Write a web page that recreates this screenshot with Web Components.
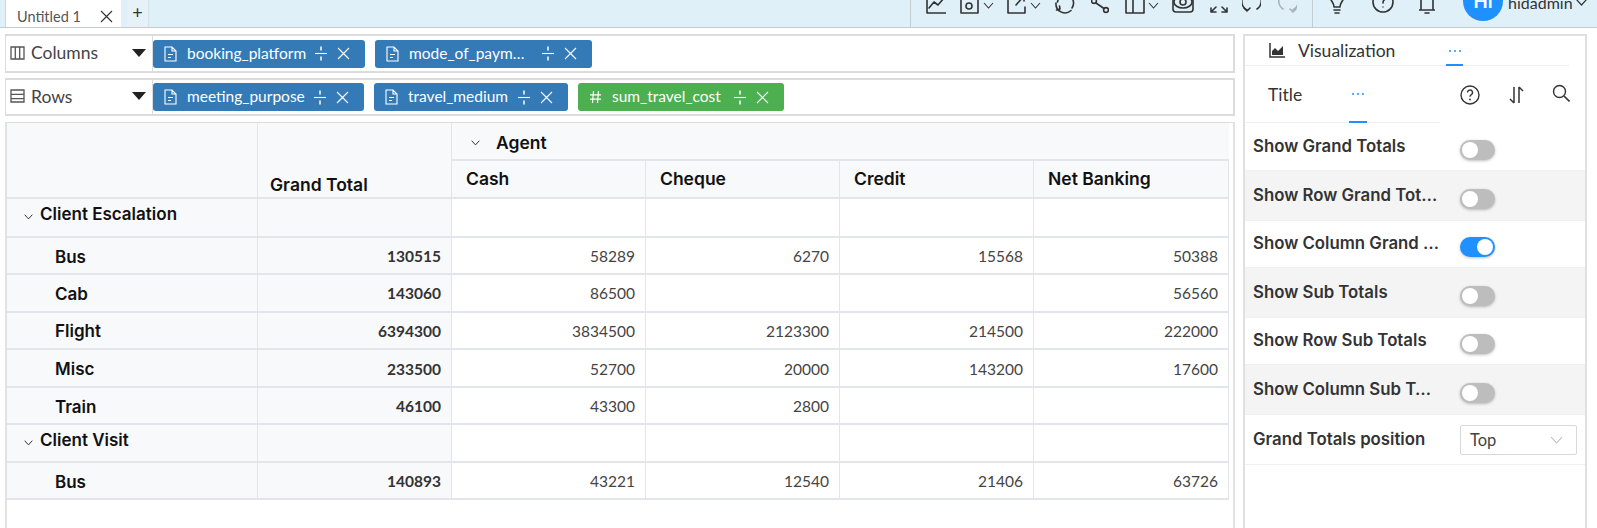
<!DOCTYPE html>
<html><head><meta charset="utf-8">
<style>
html,body{margin:0;padding:0;background:#fff;height:528px;overflow:hidden;font-family:Lato,"Liberation Sans",sans-serif;color:#222}
</style></head><body>
<app-root>
  <top-bar slot="top"></top-bar>
  <div slot="main" style="display:flex;flex-direction:column;gap:5px">
    <shelf-row label="Columns" kind="cols">
      <field-pill name="booking_platform"></field-pill>
      <field-pill name="mode_of_payment_type" style="margin-left:10px"></field-pill>
    </shelf-row>
    <shelf-row label="Rows" kind="rows" style="height:38px">
      <field-pill name="meeting_purpose"></field-pill>
      <field-pill name="travel_medium" style="margin-left:10px"></field-pill>
      <field-pill name="sum_travel_cost" kind="num" style="margin-left:10px"></field-pill>
    </shelf-row>
  </div>
  <pivot-table slot="table"></pivot-table>
  <side-panel slot="side">
    <set-row label="Show Grand Totals" h="48" p="13"><tog-gle></tog-gle></set-row>
    <set-row label="Show Row Grand Totals" h="50" p="14" alt><tog-gle></tog-gle></set-row>
    <set-row label="Show Column Grand Totals" h="47" p="12"><tog-gle on></tog-gle></set-row>
    <set-row label="Show Sub Totals" h="50" p="14" alt><tog-gle></tog-gle></set-row>
    <set-row label="Show Row Sub Totals" h="47" p="12"><tog-gle></tog-gle></set-row>
    <set-row label="Show Column Sub Totals" h="50" p="14" alt><tog-gle></tog-gle></set-row>
    <set-row label="Grand Totals position" h="50" p="14" c="10"><sel-box>Top</sel-box></set-row>
  </side-panel>
</app-root>
<script>
const S='fill="none" stroke="currentColor" stroke-width="1.6" stroke-linecap="round" stroke-linejoin="round"';
const svg=(w,h,vb,b)=>`<svg width="${w}" height="${h}" viewBox="${vb}" style="display:block;flex:none">${b}</svg>`;
const chev=`<svg width="11" height="7" viewBox="0 0 11 7" style="display:block;flex:none;margin-bottom:5px"><path d="M1 1l4.5 5L10 1" fill="none" stroke="#333" stroke-width="1.1"/></svg>`;
const BOLD='Inter,Lato,sans-serif';
function def(name,css,html,init){
  customElements.define(name,class extends HTMLElement{
    connectedCallback(){ if(this.shadowRoot) return;
      const r=this.attachShadow({mode:'open'});
      r.innerHTML=`<style>${css}</style>`+(typeof html==='function'?html(this):html);
      if(init) init(this,r);
    }
  });
}
def('app-root',`
:host{display:grid;grid-template-columns:1243px 354px;grid-template-rows:28px 88px 1fr;height:528px;width:1597px;position:relative}
.top{grid-column:1/3}
.main{grid-column:1;grid-row:2;padding:6px 8px 0 5px;box-sizing:border-box}
.table{grid-column:1;grid-row:3;box-sizing:border-box;margin:6px 8px 0 5px;border-left:2px solid #e2e2e2;border-top:1px solid #ddd;border-right:2px solid #e2e2e2;overflow:hidden}
.side{grid-column:2;grid-row:2/4;padding-top:6px;padding-right:10px;box-sizing:border-box;min-height:0}
`,`<div class="top"><slot name="top"></slot></div><div class="main"><slot name="main"></slot></div><div class="table"><slot name="table"></slot></div><div class="side"><slot name="side"></slot></div>`);

def('top-bar',`
:host{display:flex;height:28px;background:#e0f0f9;border-bottom:1px solid #c5cbcf;box-sizing:border-box;overflow:hidden;color:#333}
.tab{display:flex;align-items:center;width:116px;margin-left:5px;height:27px;background:#fff;box-sizing:border-box;border-left:1px solid #cfd5d8;padding:6px 8px 0 11px;justify-content:space-between;color:#555;font-size:14.5px}
.plus{width:22px;height:27px;margin-left:6px;background:#e6f2f8;border-right:1px solid #d5e3ea;text-align:center;font-size:18px;line-height:24px;color:#333;box-sizing:border-box}
.tools{margin-left:auto;display:flex;height:41px;margin-top:-14px;width:687px;box-sizing:border-box}
.sep{width:1px;height:27px;margin-top:14px;background:#c3cdd2;flex:none}
.ic{display:flex;align-items:flex-end;gap:3px;color:#333;height:28px;flex:none}
.user{display:flex;flex:none}
.av{width:40px;height:40px;border-radius:50%;background:#1e90ff;color:#fff;font-size:19px;text-align:center;line-height:40px;margin-top:-5px;font-weight:700;flex:none}
.nm{font-size:16px;line-height:20px;margin-top:7px;color:#333;margin-left:5px}
`,()=>{
 const ic=(w,ml,b,c)=>`<div class="ic" style="margin-left:${ml}px">${svg(w,26,`0 0 ${w} 26`,b)}${c?chev:''}</div>`;
 return `<div class="tab"><span>Untitled 1</span>${svg(13,13,'0 0 13 13','<path d="M1 1l11 11M12 1L1 12" stroke="#333" stroke-width="1.1"/>')}</div><div class="plus">+</div>
 <div class="tools"><div class="sep"></div>
 ${ic(20,15,`<path d="M1 8v17h19" ${S}/><path d="M3 20l5-6 4 3 6-7" ${S}/>`)}
 ${ic(20,14,`<path d="M1 8v17h17V8" ${S}/><circle cx="9" cy="18" r="3" ${S}/>`,1)}
 ${ic(20,13,`<path d="M1 8v17h17V19M9 17l8-9M12 8h5v5" ${S}/>`,1)}
 ${ic(20,14,`<path d="M1 15a9 9 0 0 0 15 7.5M18 12a9 9 0 0 1-1 8M3 12l-.5 2" ${S}/><path d="M1.5 22l3.5-1-.5-3" ${S}/>`)}
 ${ic(18,16,`<circle cx="3" cy="13" r="2.4" ${S}/><circle cx="15" cy="22" r="2.4" ${S}/><path d="M5 15l8 5.5M5 11l7-5" ${S}/>`)}
 ${ic(20,16,`<path d="M1 8v17h18V8M8 8v17" ${S}/>`,1)}
 ${ic(22,13,`<rect x="1" y="6" width="20" height="18" rx="3" ${S}/><ellipse cx="11" cy="14" rx="9" ry="6" ${S}/><circle cx="11" cy="14" r="3" ${S}/>`)}
 ${ic(19,15,`<path d="M2 24l5-5M2 24h5M2 24v-4M18 24l-5-5M18 24h-5M18 24v-4M5 8l3 3M15 8l-3 3" ${S}/>`)}
 ${ic(19,14,`<path d="M6 4a10 10 0 0 0-1 18M14 4a10 10 0 0 1 1 17" ${S}/><path d="M2 20l3 3 3-3" ${S}/>`)}
 <div class="ic" style="margin-left:17px;color:#a8b1b6">${svg(19,26,'0 0 19 26',`<path d="M6 4a10 10 0 0 0-1 17M14 4a10 10 0 0 1 1 18" ${S}/><path d="M12 21l3 3 3-3" ${S}/>`)}</div>
 <div class="sep" style="margin-left:15px"></div>
 ${ic(20,14,`<path d="M3 8c0 5 4 6 4 11h6c0-5 4-6 4-11M7 22h6M8 25h4" ${S}/>`)}
 <div class="ic" style="margin-left:25px">${svg(22,26,'0 0 22 26',`<circle cx="11" cy="14" r="10" ${S}/><path d="M8 8a3 3 0 1 1 4 4c-1 1-1 2-1 3" ${S}/><circle cx="11" cy="19" r=".7" fill="currentColor"/>`)}</div>
 ${ic(16,25,`<path d="M2 4v18M14 4v18M0.5 22h15M6 25h4" ${S}/>`)}
 <div class="user" style="margin-left:28px"><div class="av">Hi</div><div class="nm">hidadmin</div></div>
 <div style="align-self:flex-start;margin:12px 0 0 2px;flex:none">${svg(13,8,'0 0 13 8','<path d="M1 1l5.5 6L12 1" fill="none" stroke="#333" stroke-width="1.2"/>')}</div>
 </div>`;});

def('shelf-row',`
:host{display:flex;height:39px;border:1px solid #dcdcdc;border-width:2px 2px 2px 1px;box-sizing:border-box;align-items:center;color:#333}
.lab{width:147px;box-sizing:border-box;display:flex;align-items:center;height:100%;border-right:1px solid #dcdcdc;padding:0 6px 2px 4px;font-size:17.5px;flex:none;color:#444}
.txt{margin-left:6px}
.car{margin-left:auto;width:0;height:0;border:7px solid transparent;border-top:8px solid #222;border-bottom:0}
.pills{display:flex;align-items:center}
`,h=>{
 const k=h.getAttribute('kind');
 const i=k==='cols'?svg(15,14,'0 0 15 14','<path d="M1 1h13v12H1zM5.3 1v12M9.7 1v12" fill="none" stroke="#555" stroke-width="1.3"/>'):svg(15,14,'0 0 15 14','<path d="M1 1h13v12H1zM1 5.3h13M1 9.7h13" fill="none" stroke="#555" stroke-width="1.3"/>');
 return `<div class="lab">${i}<span class="txt">${h.getAttribute('label')}</span><span class="car"></span></div><div class="pills"><slot></slot></div>`;});

def('field-pill',`
:host{display:inline-flex;align-items:center;height:28px;background:#337ab7;color:#fff;border-radius:3px;padding:0 15px 0 11px;font-size:15.5px;box-sizing:border-box}
:host([kind=num]){background:#4caf50}
.t{margin-left:10px;white-space:nowrap;overflow:hidden;text-overflow:ellipsis;padding-bottom:2px}
.d{margin-left:8px}.x{margin-left:10px}
`,h=>{
 const n=h.getAttribute('name');
 const num=h.getAttribute('kind')==='num';
 const ic=num?svg(13,14,'0 0 13 14','<path d="M4.5 1L3.5 13M9.5 1L8.5 13M1 4.8h11M1 9.2h11" stroke="#fff" stroke-width="1.2" fill="none"/>')
 :svg(13,16,'0 0 13 16','<path d="M1 1h7l4 4v10H1zM8 1v4h4M4 8.5h5M4 11.5h3" stroke="#fff" stroke-width="1.1" fill="none"/>');
 const w={booking_platform:120,mode_of_payment_type:118,meeting_purpose:119,travel_medium:102,sum_travel_cost:114}[n];
 const dm=n==='mode_of_payment_type'?15:8;
 return `${ic}<span class="t" style="width:${w}px">${n}</span><span class="d" style="margin-left:${dm}px">${svg(12,17,'0 0 12 17','<path d="M0 8.5h12" stroke="#fff" stroke-width="1.1"/><path d="M6 1.5v4M6 11.5v4" stroke="#fff" stroke-width="1.5"/>')}</span><span class="x">${svg(13,13,'0 0 13 13','<path d="M1 1l11 11M12 1L1 12" stroke="#fff" stroke-width="1.1" fill="none"/>')}</span>`;});

const rows=[
 ['g','Client Escalation'],
 ['d','Bus','130515','58289','6270','15568','50388'],
 ['d','Cab','143060','86500','','','56560'],
 ['d','Flight','6394300','3834500','2123300','214500','222000'],
 ['d','Misc','233500','52700','20000','143200','17600'],
 ['d','Train','46100','43300','2800','',''],
 ['g','Client Visit'],
 ['d','Bus','140893','43221','12540','21406','63726']];
def('pivot-table',`
:host{display:grid;width:1222px;grid-template-columns:251px 194px 194px 194px 194px 195px;font-size:15.5px;color:#222;grid-template-rows:38px 38px 39px 37px 37.5px 37.5px 38px 37px 38px 37px}
div{box-sizing:border-box;border-right:1px solid #e2e5e9;border-bottom:2px solid #e2e5e9;display:flex;align-items:center;white-space:nowrap}
.h{background:#f8f9fb}
.b{font:600 17.5px ${BOLD};color:#111}
.rh{background:#f8f9fb;font:600 17px ${BOLD};color:#111;padding:2px 0 0 48px}
.gr{gap:7px;align-items:flex-start;padding:5px 0 0 17px}
.gr2{background:#f8f9fb}
.n{justify-content:flex-end;padding:1px 10px 0 0;color:#444}
.gt{background:#f8f9fb;font-weight:700;color:#333;justify-content:flex-end;padding:1px 10px 0 0}
.e{background:#fff}
svg{flex:none;display:block}
`,()=>{
 const cv=`<svg width="9" height="6" viewBox="0 0 9 6"><path d="M.7.7l3.8 4.2L8.3.7" fill="none" stroke="#333" stroke-width="1"/></svg>`;
 let o=`<div class="h" style="grid-row:1/3"></div><div class="h b" style="grid-row:1/3;padding:48px 0 0 12px">Grand Total</div>
 <div class="h b" style="grid-column:3/7;padding:3px 0 0 19px;gap:16px;border-right:0">${cv}<span>Agent</span></div>
 ${['Cash','Cheque','Credit','Net Banking'].map(t=>`<div class="h b" style="padding:0 0 2px 14px">${t}</div>`).join('')}`;
 for(const r of rows){
  if(r[0]==='g'){o+=`<div class="rh gr"><span style="display:block;padding-top:10px">${cv}</span><span>${r[1]}</span></div><div class="gr2"></div>`+'<div class="e"></div>'.repeat(4);}
  else{o+=`<div class="rh">${r[1]}</div><div class="gt">${r[2]}</div>`+r.slice(3).map(v=>`<div class="n">${v}</div>`).join('');}
 }
 return o;});

def('side-panel',`
:host{display:block;height:100%;box-sizing:border-box;border:2px solid #e0e0e0;border-bottom:0;color:#222}
.tabs{display:flex;align-items:center;height:30px;width:324px;border-bottom:1px solid #eee;padding:0 0 0 24px;box-sizing:border-box;font-size:17.5px;position:relative;color:#333}
.v{margin-left:13px;width:148px}
.dots{color:#1e90ff;display:flex;gap:3px;position:relative;height:100%;align-items:center;padding:0 1px;width:17px;box-sizing:border-box;justify-content:center}
.dots i{width:2px;height:2px;background:#1e90ff;border-radius:50%;flex:none}
.dots::after{content:"";position:absolute;left:0;right:0;bottom:-1px;height:2px;background:#1e90ff}
.sub{display:flex;height:57px;align-items:center;padding-left:23px;font-size:17.5px;color:#333}
.subl{display:flex;align-items:center;width:195px;height:100%;border-bottom:1px solid #eee;box-sizing:border-box;padding-left:23px;margin-left:-23px;flex:none}
.sub .dots{width:18px;margin-left:42px;height:100%}
.icons{display:flex;align-items:center;margin-left:20px}
`,`<div class="tabs">${svg(16,15,'0 0 16 15','<path d="M1 0v14h15" fill="none" stroke="#333" stroke-width="1.5"/><path d="M3 12V8l3-3 3 3 5-5v9z" fill="#333"/>')}<span class="v">Visualization</span><span class="dots"><i></i><i></i><i></i></span></div>
<div class="sub"><div class="subl"><span style="width:39px">Title</span><span class="dots"><i></i><i></i><i></i></span></div>
<div class="icons">${svg(20,20,'0 0 20 20','<circle cx="10" cy="10" r="9" fill="none" stroke="#333" stroke-width="1.4"/><path d="M7.5 7.5a2.5 2.5 0 1 1 3.6 2.3c-.8.5-1.1 1-1.1 2" fill="none" stroke="#333" stroke-width="1.4"/><circle cx="10" cy="14.5" r=".9" fill="#333"/>')}
<span style="margin-left:28px">${svg(16,18,'0 0 16 18','<path d="M6 1v16M6 17l-4-4M11 17V1M11 1l4 4" fill="none" stroke="#333" stroke-width="1.5"/>')}</span>
<span style="margin-left:28px;margin-top:-3px">${svg(18,18,'0 0 18 18','<circle cx="7.5" cy="7.5" r="6" fill="none" stroke="#333" stroke-width="1.4"/><path d="M12 12l5.5 5.5" stroke="#333" stroke-width="1.6"/>')}</span></div></div>
<slot></slot>`);

def('set-row',`
:host{display:flex;box-sizing:border-box;padding-left:8px;font:600 16.8px ${BOLD};color:#333;position:relative;border-bottom:1px solid #f0f0f0}
:host([alt]){background:#f4f4f4}
.l{width:207px;box-sizing:border-box;line-height:20px;white-space:nowrap;overflow:hidden;text-overflow:ellipsis;padding-right:20px;flex:none}
`,h=>{h.style.height=h.getAttribute('h')+'px';const p=+h.getAttribute('p');const c=h.getAttribute('c');return `<div class="l" style="padding-top:${p}px">${h.getAttribute('label')}</div><div style="padding-top:${c||p+4}px"><slot></slot></div>`;});

def('tog-gle',`
:host{display:block;width:35px;height:20px;border-radius:10px;background:#bdbdbd;position:relative;box-shadow:0 1px 3px rgba(0,0,0,.25)}
:host([on]){background:#1e90ff}
i{position:absolute;top:2px;left:2px;width:16px;height:16px;border-radius:50%;background:#fff}
:host([on]) i{left:17px}
`,`<i></i>`);

def('sel-box',`
:host{display:flex;align-items:center;width:117px;height:30px;border:1px solid #d9d9d9;border-radius:2px;box-sizing:border-box;padding:0 13px 0 9px;font:400 16.5px Lato,sans-serif;color:#444;justify-content:space-between;background:#fff}
`,`<slot></slot>${svg(13,8,'0 0 13 8','<path d="M1 1l5.5 6L12 1" fill="none" stroke="#bbb" stroke-width="1.1"/>')}`);
</script>
</body></html>
